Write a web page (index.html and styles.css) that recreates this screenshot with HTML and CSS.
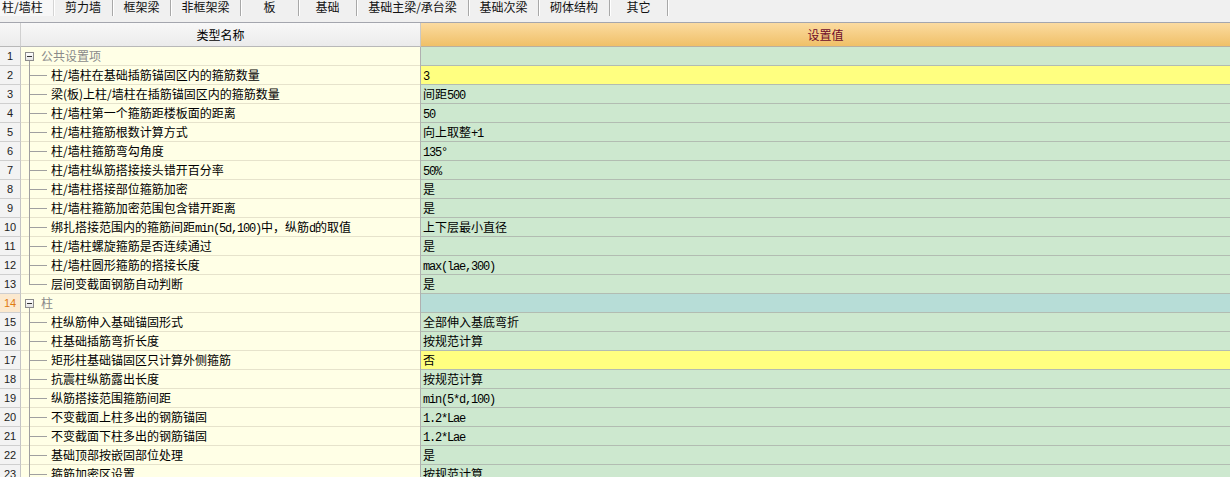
FILE: index.html
```html
<!DOCTYPE html>
<html lang="zh">
<head>
<meta charset="utf-8">
<link rel="stylesheet" href="styles.css">
</head>
<body>
<div class="tabs">
  <div class="tab sel">柱/墙柱</div>
  <div class="tab">剪力墙</div>
  <div class="tab">框架梁</div>
  <div class="tab">非框架梁</div>
  <div class="tab">板</div>
  <div class="tab">基础</div>
  <div class="tab">基础主梁/承台梁</div>
  <div class="tab">基础次梁</div>
  <div class="tab">砌体结构</div>
  <div class="tab">其它</div>
</div>
<div class="grid">
  <div class="row hdr">
    <div class="num"></div>
    <div class="name">类型名称</div>
    <div class="val">设置值</div>
  </div>

  <div class="row grp">
    <div class="num">1</div>
    <div class="name"><span class="gb"><span class="sp"></span><span class="box"></span><span class="gl"></span></span><span class="txt">公共设置项</span></div>
    <div class="val"></div>
  </div>
  <div class="row">
    <div class="num">2</div>
    <div class="name"><span class="conn"><span class="t"></span><span class="b"></span></span><span class="txt">柱/墙柱在基础插筋锚固区内的箍筋数量</span></div>
    <div class="val yel"><span class="a">3</span></div>
  </div>
  <div class="row">
    <div class="num">3</div>
    <div class="name"><span class="conn"><span class="t"></span><span class="b"></span></span><span class="txt">梁(板)上柱/墙柱在插筋锚固区内的箍筋数量</span></div>
    <div class="val">间距<span class="a">500</span></div>
  </div>
  <div class="row">
    <div class="num">4</div>
    <div class="name"><span class="conn"><span class="t"></span><span class="b"></span></span><span class="txt">柱/墙柱第一个箍筋距楼板面的距离</span></div>
    <div class="val"><span class="a">50</span></div>
  </div>
  <div class="row">
    <div class="num">5</div>
    <div class="name"><span class="conn"><span class="t"></span><span class="b"></span></span><span class="txt">柱/墙柱箍筋根数计算方式</span></div>
    <div class="val">向上取整<span class="a">+1</span></div>
  </div>
  <div class="row">
    <div class="num">6</div>
    <div class="name"><span class="conn"><span class="t"></span><span class="b"></span></span><span class="txt">柱/墙柱箍筋弯勾角度</span></div>
    <div class="val"><span class="a">135°</span></div>
  </div>
  <div class="row">
    <div class="num">7</div>
    <div class="name"><span class="conn"><span class="t"></span><span class="b"></span></span><span class="txt">柱/墙柱纵筋搭接接头错开百分率</span></div>
    <div class="val"><span class="a">50%</span></div>
  </div>
  <div class="row">
    <div class="num">8</div>
    <div class="name"><span class="conn"><span class="t"></span><span class="b"></span></span><span class="txt">柱/墙柱搭接部位箍筋加密</span></div>
    <div class="val">是</div>
  </div>
  <div class="row">
    <div class="num">9</div>
    <div class="name"><span class="conn"><span class="t"></span><span class="b"></span></span><span class="txt">柱/墙柱箍筋加密范围包含错开距离</span></div>
    <div class="val">是</div>
  </div>
  <div class="row">
    <div class="num">10</div>
    <div class="name"><span class="conn"><span class="t"></span><span class="b"></span></span><span class="txt">绑扎搭接范围内的箍筋间距<span class="a">min(5d,100)</span>中，纵筋<span class="a">d</span>的取值</span></div>
    <div class="val">上下层最小直径</div>
  </div>
  <div class="row">
    <div class="num">11</div>
    <div class="name"><span class="conn"><span class="t"></span><span class="b"></span></span><span class="txt">柱/墙柱螺旋箍筋是否连续通过</span></div>
    <div class="val">是</div>
  </div>
  <div class="row">
    <div class="num">12</div>
    <div class="name"><span class="conn"><span class="t"></span><span class="b"></span></span><span class="txt">柱/墙柱圆形箍筋的搭接长度</span></div>
    <div class="val"><span class="a">max(lae,300)</span></div>
  </div>
  <div class="row">
    <div class="num">13</div>
    <div class="name"><span class="conn last"><span class="t"></span><span class="b"></span></span><span class="txt">层间变截面钢筋自动判断</span></div>
    <div class="val">是</div>
  </div>

  <div class="row grp cur">
    <div class="num">14</div>
    <div class="name"><span class="gb"><span class="sp"></span><span class="box"></span><span class="gl"></span></span><span class="txt">柱</span></div>
    <div class="val teal"></div>
  </div>
  <div class="row">
    <div class="num">15</div>
    <div class="name"><span class="conn"><span class="t"></span><span class="b"></span></span><span class="txt">柱纵筋伸入基础锚固形式</span></div>
    <div class="val">全部伸入基底弯折</div>
  </div>
  <div class="row">
    <div class="num">16</div>
    <div class="name"><span class="conn"><span class="t"></span><span class="b"></span></span><span class="txt">柱基础插筋弯折长度</span></div>
    <div class="val">按规范计算</div>
  </div>
  <div class="row">
    <div class="num">17</div>
    <div class="name"><span class="conn"><span class="t"></span><span class="b"></span></span><span class="txt">矩形柱基础锚固区只计算外侧箍筋</span></div>
    <div class="val yel">否</div>
  </div>
  <div class="row">
    <div class="num">18</div>
    <div class="name"><span class="conn"><span class="t"></span><span class="b"></span></span><span class="txt">抗震柱纵筋露出长度</span></div>
    <div class="val">按规范计算</div>
  </div>
  <div class="row">
    <div class="num">19</div>
    <div class="name"><span class="conn"><span class="t"></span><span class="b"></span></span><span class="txt">纵筋搭接范围箍筋间距</span></div>
    <div class="val"><span class="a">min(5*d,100)</span></div>
  </div>
  <div class="row">
    <div class="num">20</div>
    <div class="name"><span class="conn"><span class="t"></span><span class="b"></span></span><span class="txt">不变截面上柱多出的钢筋锚固</span></div>
    <div class="val"><span class="a">1.2*Lae</span></div>
  </div>
  <div class="row">
    <div class="num">21</div>
    <div class="name"><span class="conn"><span class="t"></span><span class="b"></span></span><span class="txt">不变截面下柱多出的钢筋锚固</span></div>
    <div class="val"><span class="a">1.2*Lae</span></div>
  </div>
  <div class="row">
    <div class="num">22</div>
    <div class="name"><span class="conn"><span class="t"></span><span class="b"></span></span><span class="txt">基础顶部按嵌固部位处理</span></div>
    <div class="val">是</div>
  </div>
  <div class="row">
    <div class="num">23</div>
    <div class="name"><span class="conn"><span class="t"></span><span class="b"></span></span><span class="txt">箍筋加密区设置</span></div>
    <div class="val">按规范计算</div>
  </div>
</div>
</body>
</html>
```
FILE: styles.css
```css
html, body {
  margin: 0;
  padding: 0;
  width: 1230px;
  height: 477px;
  overflow: hidden;
  background: #ffffff;
  font-family: "Noto Sans CJK SC", "Liberation Sans", sans-serif;
  font-size: 12px;
  color: #000;
}

.tabs {
  display: flex;
  height: 22px;
  background: #f0f0f0;
  border-bottom: 1px solid #a4a6ae;
}
.tab {
  box-sizing: border-box;
  height: 16px;
  line-height: 13px;
  text-align: center;
  border-right: 1px solid #a8a8a8;
  box-shadow: 1px 0 0 #ffffff;
  white-space: nowrap;
  color: #111;
}
.tab:nth-child(1) { width: 54px; background: #f7f7f7; border-right-color: #d4d4d4; text-align: left; padding-left: 2px; }
.tab:nth-child(2) { width: 59px; }
.tab:nth-child(3) { width: 58px; }
.tab:nth-child(4) { width: 70px; }
.tab:nth-child(5) { width: 58px; }
.tab:nth-child(6) { width: 58px; }
.tab:nth-child(7) { width: 112px; }
.tab:nth-child(8) { width: 70px; }
.tab:nth-child(9) { width: 71px; }
.tab:nth-child(10) { width: 58px; }

.grid {
  display: flex;
  flex-direction: column;
}
.row {
  display: grid;
  grid-template-columns: 21px 400px 1fr;
  height: 19px;
}
.row > div {
  box-sizing: border-box;
  white-space: nowrap;
  overflow: hidden;
}

.num {
  background: #f3f3f3;
  border-right: 1px solid #c4c4c4;
  border-bottom: 1px solid #cfcfcf;
  text-align: center;
  font-family: "Liberation Sans", sans-serif;
  font-size: 11px;
  line-height: 18px;
  color: #222;
}
.name {
  background: linear-gradient(to top, #e6e3cc 1px, #ffffe6 1px);
  border-right: 1px solid #b0b0b0;
  display: flex;
  align-items: stretch;
  line-height: 18px;
}
.val {
  background: #cde8cf;
  border-bottom: 1px solid #b2bcb2;
  padding-left: 2px;
  line-height: 18px;
}
.val.yel { background: #ffff80; }
.val.teal { background: #b7ddd7; }

.txt { display: block; }

.conn {
  display: flex;
  flex-direction: column;
  width: 18px;
  margin-left: 8px;
  margin-right: 4px;
}
.conn .t {
  box-sizing: border-box;
  height: 10px;
  border-left: 1px solid #a0a0a0;
  border-bottom: 1px solid #a0a0a0;
}
.conn .b {
  flex: 1;
  border-left: 1px solid #a0a0a0;
}
.conn.last .b { border-left-color: transparent; }

.gb {
  display: flex;
  flex-direction: column;
  align-items: center;
  width: 9px;
  margin-left: 4px;
  margin-right: 7px;
}
.gb .sp { height: 5px; }
.gb .box {
  box-sizing: border-box;
  width: 9px;
  height: 9px;
  border: 1px solid #8c8c8c;
  background: linear-gradient(#ffffff, #e4e4e4);
  display: flex;
  align-items: center;
  justify-content: center;
}
.gb .box::before {
  content: "";
  width: 5px;
  height: 1px;
  background: #333;
}
.gb .gl {
  flex: 1;
  width: 0;
  border-left: 1px solid #a0a0a0;
}
.grp .txt { color: #8a8a8a; }

.cur .num {
  background: #fbe9cf;
  color: #e07a10;
}

.hdr { height: 24px; }
.hdr .num {
  background: linear-gradient(#f7f7f7, #ececec);
  border-bottom: 1px solid #b8b8b8;
  border-right: 1px solid #d0d0d0;
}
.hdr .name {
  background: linear-gradient(#f8f8f8, #ebebeb);
  border-bottom: 1px solid #b8b8b8;
  border-right: 1px solid #c8c8c8;
  justify-content: center;
  line-height: 23px;
}
.hdr .val {
  background: linear-gradient(#fbdba0, #f0c068);
  border-bottom: 1px solid #b8b0a0;
  text-align: center;
  padding-left: 0;
  line-height: 23px;
  color: #6e0a2a;
}

.a {
  font-family: "Liberation Mono", monospace;
  font-size: 12px;
  letter-spacing: -1.2px;
}
```
